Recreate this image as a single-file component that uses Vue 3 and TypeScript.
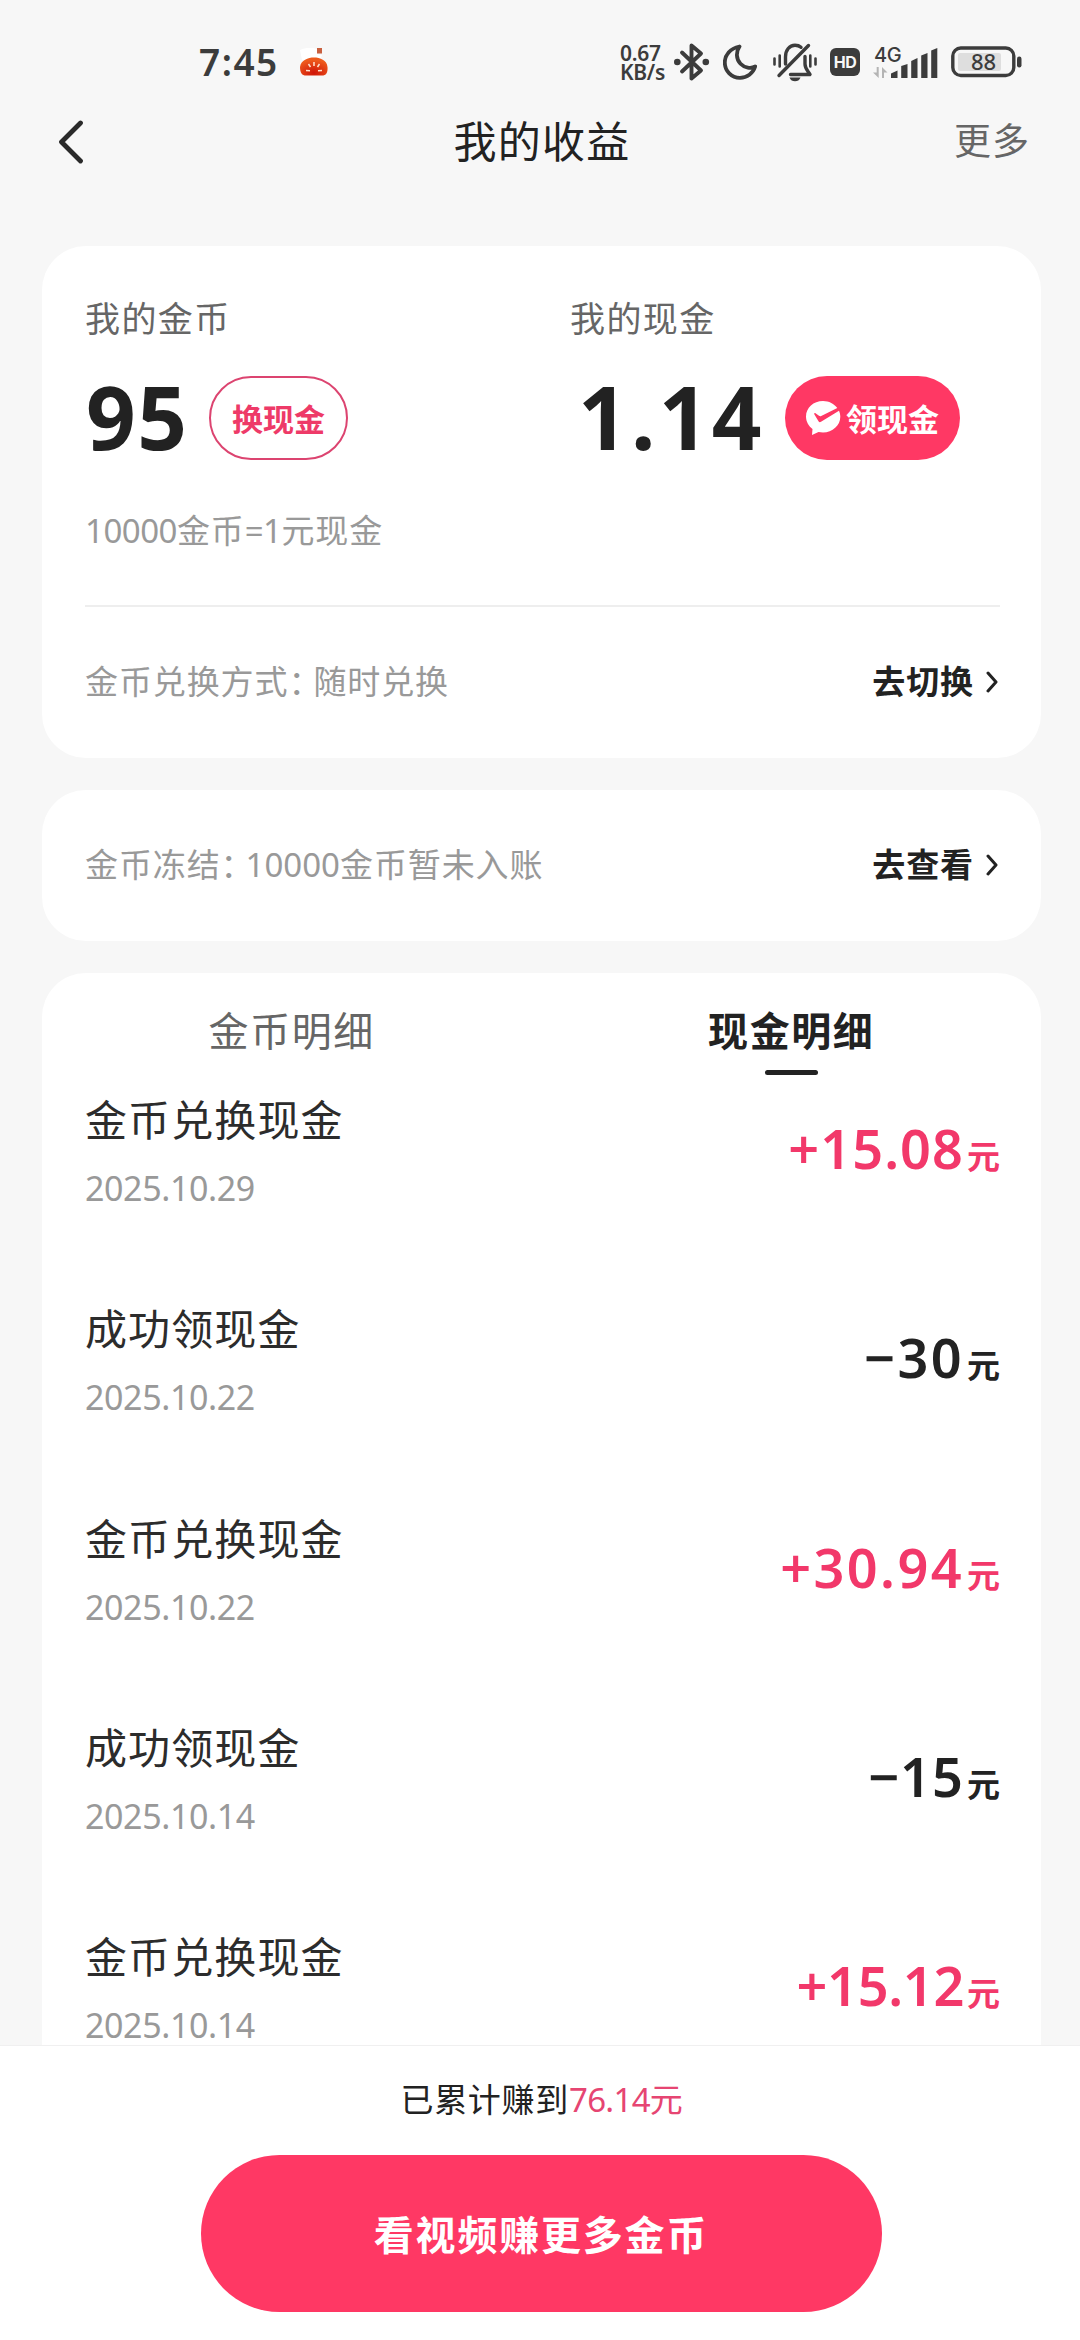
<script setup lang="ts">
interface CashRecord {
  title: string
  date: string
  amount: string
  income: boolean
}

const records: CashRecord[] = [
  { title: '金币兑换现金', date: '2025.10.29', amount: '+15.08', income: true },
  { title: '成功领现金', date: '2025.10.22', amount: '−30', income: false },
  { title: '金币兑换现金', date: '2025.10.22', amount: '+30.94', income: true },
  { title: '成功领现金', date: '2025.10.14', amount: '−15', income: false },
  { title: '金币兑换现金', date: '2025.10.14', amount: '+15.12', income: true },
]

function tracking(amount: string): string {
  const ones = amount.split('1').length - 1
  return `${(2.4 - 1.35 * ones).toFixed(2)}px`
}
</script>

<template>
  <div class="page">
    <header class="status">
      <span class="time">7:45</span>
      <svg class="pot" width="28" height="28" viewBox="0 0 28 28">
        <defs>
          <radialGradient id="potFill" cx="50%" cy="85%" r="70%">
            <stop offset="0" stop-color="#cf1408" />
            <stop offset="1" stop-color="#ee5a1c" />
          </radialGradient>
        </defs>
        <path d="M0 2 Q9 -2 17 1 L17 6 L22 7 L20 12 L2 12 Z" fill="#fff" />
        <rect x="17" y="0" width="5" height="5.5" fill="#c9603f" />
        <path d="M0 19 C1 12 8 9.500 14 9.500 C20 9.500 27 12 27.500 19 C28 25 26 27.500 22 27.500 H6 C2 27.500 0 25 0 19 Z" fill="url(#potFill)" />
        <path d="M14 14v4M8.500 16l2 3M19.500 16l-2 3M6 22.500l4 .2M22 22.500l-4 .2" stroke="#ffe3cf" stroke-width="1.500" />
      </svg>
      <div class="speed"><span>0.67</span><span>KB/s</span></div>
      <svg class="bt" width="36" height="40" viewBox="0 0 36 40" fill="none" stroke="#3c3c3c" stroke-width="3.900" stroke-linejoin="round" stroke-linecap="round">
        <path d="M8 10.500 L27 28.500 L17.500 36.500 V3.500 L27 11.500 L8 29.500" />
        <circle cx="3.300" cy="20" r="3.300" fill="#3c3c3c" stroke="none" />
        <circle cx="31.800" cy="20" r="3.300" fill="#3c3c3c" stroke="none" />
      </svg>
      <svg class="moon" width="34" height="36" viewBox="0 0 34 36" fill="none" stroke="#3c3c3c" stroke-width="3.800" stroke-linejoin="round">
        <path d="M16.500 2.500 C7 4.500 1.800 11 1.800 18.500 C1.800 27 8.500 33.800 17 33.800 C24 33.800 30 29.500 32.200 22.500 C28 24.800 21.500 24 17.500 19.800 C13 15 12.800 8 16.500 2.500 Z" />
      </svg>
      <svg class="bell" width="44" height="40" viewBox="0 0 44 40" fill="none" stroke="#3c3c3c" stroke-width="3.400" stroke-linecap="round" stroke-linejoin="round">
        <path d="M12.500 22 V15 C12.500 8 16.500 3.300 22 3.300 C24.500 3.300 26.500 4 28 5.300" />
        <path d="M32 14.500 V22 C32 26.500 34.500 28.500 37 32.500 H17.500" />
        <path d="M35.500 3.500 L6 33.500" />
        <path d="M1.500 16.500v6M6.700 13.500v11M37.300 13.500v11M42.500 16.500v6" stroke-width="2.600" />
        <path d="M16.500 35.500 H27.500 C26.500 38.300 24.500 39.300 22 39.300 C19.500 39.300 17.500 38.300 16.500 35.500 Z" fill="#3c3c3c" stroke="none" />
      </svg>
      <span class="hd">HD</span>
      <svg class="signal" width="65" height="36" viewBox="0 0 65 36">
        <text x="1" y="18" class="net">4G</text>
        <path d="M5.700 24 V35 L0 29.500 H3.700 V24 Z" fill="#b4b4b4" transform="translate(0 -1)" />
        <path d="M9 35 V24 L14.500 29.500 H11 V35 Z" fill="#b4b4b4" transform="translate(0 -1)" />
        <g fill="#3c3c3c">
          <path d="M18 29.500 L24.500 26.500 V34 H18 Z" />
          <path d="M28.200 22 L34.500 20 V34 H28.200 Z" />
          <path d="M38.200 17 L44.500 14 V34 H38.200 Z" />
          <path d="M48.200 11.500 L54.500 9 V34 H48.200 Z" />
          <path d="M58.200 6.500 L64.300 4 V34 H58.200 Z" />
        </g>
      </svg>
      <svg class="battery" width="71" height="32" viewBox="0 0 71 32">
        <rect x="1.800" y="2" width="61" height="27.500" rx="8" fill="none" stroke="#3c3c3c" stroke-width="3.400" />
        <rect x="7" y="7" width="43" height="18" rx="2" fill="#dedede" />
        <rect x="66" y="10.500" width="4.500" height="11" rx="2.200" fill="#3c3c3c" />
        <text x="32.500" y="24" text-anchor="middle" class="level">88</text>
      </svg>
    </header>

    <nav class="nav">
      <svg class="back" width="26" height="44" viewBox="0 0 26 44" fill="none" stroke="#2a2a2a" stroke-width="4.800" stroke-linecap="round" stroke-linejoin="round">
        <path d="M22.500 3 L3.500 22 L22.500 41" />
      </svg>
      <h1>我的收益</h1>
      <span class="more">更多</span>
    </nav>

    <main class="content">
      <section class="card">
        <div class="balances">
          <div class="balance coins">
            <div class="label">我的金币</div>
            <div class="value-row">
              <span class="value">95</span>
              <button class="pill outline">换现金</button>
            </div>
          </div>
          <div class="balance">
            <div class="label">我的现金</div>
            <div class="value-row">
              <span class="value cash">1.14</span>
              <button class="pill solid">
                <svg width="35" height="34" viewBox="0 0 35 34">
                  <path d="M17 0 C7.500 0 0 6.800 0 15.500 C0 20.500 2.500 25 6.500 28 L6 34 L12.500 31 C14 31.300 15.500 31.500 17 31.500 C26.500 31.500 34.300 24.500 34.300 15.800 C34.300 13.500 33.800 11.500 33 9.700 L15 20.800 C14 21.400 13.200 21.300 12.500 20.300 L8.300 13.300 C8 12.300 8.800 11.800 9.500 12.300 L13 14.800 C13.700 15.300 14.500 15.300 15.200 15 L31.300 7 C28.200 2.800 23 0 17 0 Z" fill="#fff" />
                </svg>
                <span>领现金</span>
              </button>
            </div>
          </div>
        </div>
        <div class="rate"><span class="num">10000</span>金币<span class="num">=1</span>元现金</div>
        <div class="divider"></div>
        <div class="row">
          <span class="hint">金币兑换方式<i class="colon">：</i>随时兑换</span>
          <span class="link">去切换
            <svg width="12" height="22" viewBox="0 0 12 22"><path d="M2 2 L10 11 L2 20" /></svg>
          </span>
        </div>
      </section>

      <section class="card frozen">
        <div class="row">
          <span class="hint">金币冻结<i class="colon">：</i><span class="num">10000</span>金币暂未入账</span>
          <span class="link">去查看
            <svg width="12" height="22" viewBox="0 0 12 22"><path d="M2 2 L10 11 L2 20" /></svg>
          </span>
        </div>
      </section>

      <section class="card details">
        <div class="tabs">
          <div class="tab">金币明细</div>
          <div class="tab active">现金明细</div>
        </div>
        <div v-for="(r, i) in records" :key="i" class="record">
          <div>
            <div class="title">{{ r.title }}</div>
            <div class="date">{{ r.date }}</div>
          </div>
          <div class="amount" :class="{ income: r.income }">
            <span :style="{ letterSpacing: tracking(r.amount) }">{{ r.amount }}</span><span class="unit">元</span>
          </div>
        </div>
      </section>
    </main>

    <footer class="footer">
      <div class="total">已累计赚到<span class="earned"><span class="num">76.14</span>元</span></div>
      <button class="cta">看视频赚更多金币</button>
    </footer>
  </div>
</template>

<style>
body {
  margin: 0;
  background: #f7f7f7;
}
</style>

<style scoped>
.page {
  display: flex;
  flex-direction: column;
  width: 1080px;
  height: 2340px;
  overflow: hidden;
  background: #f7f7f7;
  color: #222;
  font-family: Inter, "Noto Sans CJK SC", sans-serif;
}
button {
  margin: 0;
  padding: 0;
  border: 0;
  font-family: inherit;
}
svg {
  display: block;
  flex: none;
}
.num,
.value,
.date,
.amount,
.speed,
.time {
  font-family: "Noto Sans", "Noto Sans CJK SC", sans-serif;
}
.num { letter-spacing: 0; }
.status {
  box-sizing: border-box;
  display: flex;
  align-items: center;
  height: 100px;
  padding: 24px 58px 0 199px;
  color: #3c3c3c;
}
.time {
  width: 101px;
  font-size: 37px;
  font-weight: 600;
  line-height: 44px;
  letter-spacing: 1.5px;
}
.speed {
  display: flex;
  flex-direction: column;
  width: 46px;
  margin-left: auto;
  padding-top: 2px;
  font-size: 21px;
  font-weight: 600;
  line-height: 19px;
  letter-spacing: -0.3px;
}
.bt { margin-left: 8px; }
.moon { margin-left: 13px; }
.bell { margin-left: 16px; }
.hd {
  width: 30px;
  height: 28px;
  margin-left: 13px;
  border-radius: 6px;
  background: #3c3c3c;
  color: #f7f7f7;
  font-size: 16px;
  font-weight: 700;
  line-height: 29px;
  text-align: center;
  letter-spacing: -0.5px;
}
.signal { margin-left: 13px; }
.battery { margin-left: 13px; }
.net {
  font-size: 20px;
  font-weight: 500;
  fill: #3c3c3c;
  letter-spacing: -0.5px;
}
.level {
  font-family: "Noto Sans", sans-serif;
  font-size: 22px;
  font-weight: 500;
  fill: #3c3c3c;
}
.nav {
  display: flex;
  align-items: center;
  justify-content: space-between;
  height: 84px;
  padding: 0 50px 0 58px;
}
.back { margin-right: 46px; }
h1 {
  margin: 0;
  color: #222;
  font-size: 43px;
  font-weight: 400;
  line-height: 60px;
  letter-spacing: 1.2px;
}
.more {
  color: #666;
  font-size: 37px;
  line-height: 50px;
  letter-spacing: 1px;
}
.content {
  flex: 1;
  min-height: 0;
  padding: 62px 39px 0 42px;
  overflow: hidden;
}
.card {
  box-sizing: border-box;
  padding: 0 41px 0 43px;
  border-radius: 44px;
  background: #fff;
}
.balances {
  display: flex;
  padding-top: 49px;
}
.coins { width: 485px; }
.label {
  color: #666;
  font-size: 35px;
  line-height: 48px;
  letter-spacing: 1.4px;
}
.value-row {
  display: flex;
  align-items: center;
  height: 84px;
  margin-top: 33px;
}
.value {
  box-sizing: border-box;
  width: 124px;
  padding: 0 0 4px 1px;
  font-size: 87px;
  font-weight: 700;
  line-height: 84px;
  letter-spacing: 1.5px;
}
.value.cash {
  width: 215px;
  padding-left: 8px;
  letter-spacing: 3.3px;
}
.pill {
  box-sizing: border-box;
  display: flex;
  align-items: center;
  justify-content: center;
  height: 84px;
  padding-bottom: 1px;
  border-radius: 42px;
  font-size: 31px;
  font-weight: 700;
}
.outline {
  width: 139px;
  border: 2px solid #dc4470;
  background: #fff;
  color: #ee3a68;
}
.solid {
  gap: 5px;
  width: 175px;
  background: #ff3864;
  color: #fff;
}
.rate {
  margin-top: 51px;
  color: #999;
  font-size: 33px;
  line-height: 40px;
  letter-spacing: 0.9px;
}
.rate .num { letter-spacing: -0.5px; }
.divider {
  height: 2px;
  margin-top: 54px;
  background: #eee;
}
.row {
  box-sizing: border-box;
  display: flex;
  align-items: center;
  justify-content: space-between;
  height: 151px;
  padding-bottom: 1px;
}
.hint {
  color: #999;
  font-size: 33px;
  line-height: 40px;
  letter-spacing: 0.9px;
}
.colon {
  font-style: normal;
  letter-spacing: -8px;
}
.link {
  display: flex;
  align-items: center;
  gap: 12px;
  padding-right: 2px;
  font-size: 33px;
  font-weight: 700;
  line-height: 40px;
  letter-spacing: 0.9px;
}
.link svg {
  fill: none;
  stroke: #222;
  stroke-width: 3;
  stroke-linecap: round;
  stroke-linejoin: round;
}
.frozen { margin-top: 32px; }
.details {
  margin-top: 32px;
  padding: 0;
}
.tabs {
  display: flex;
  height: 102px;
}
.tab {
  display: flex;
  flex: 1;
  flex-direction: column;
  align-items: center;
  padding-top: 29px;
  color: #666;
  font-size: 40px;
  line-height: 60px;
  letter-spacing: 1.6px;
}
.tab.active {
  color: #222;
  font-weight: 700;
}
.tab.active::after {
  content: "";
  width: 53px;
  height: 5px;
  margin-top: 8px;
  border-radius: 3px;
  background: #222;
}
.record {
  box-sizing: border-box;
  display: flex;
  justify-content: space-between;
  height: 209.3px;
  padding: 21px 41px 0 43px;
}
.title {
  color: #2c2c2c;
  font-size: 42px;
  line-height: 50px;
  letter-spacing: 1.1px;
}
.date {
  margin-top: 22px;
  color: #999;
  font-size: 34px;
  line-height: 40px;
  letter-spacing: -0.4px;
}
.amount {
  margin-top: 22px;
  font-size: 54px;
  font-weight: 600;
  line-height: 60px;
}
.amount.income { color: #f2386a; }
.unit {
  margin-left: 3px;
  font-size: 33px;
}
.footer {
  box-sizing: border-box;
  display: flex;
  flex-direction: column;
  align-items: center;
  height: 295px;
  padding-top: 34px;
  border-top: 1px solid #f0f0f0;
  background: #fff;
}
.total {
  padding-left: 4px;
  font-size: 33px;
  line-height: 40px;
  letter-spacing: 0.7px;
}
.earned { color: #e64572; }
.earned .num { letter-spacing: -0.7px; }
.cta {
  width: 681px;
  height: 157px;
  margin: 35px 0 0 2px;
  padding-bottom: 2px;
  border-radius: 79px;
  background: #ff3864;
  color: #fff;
  font-size: 40px;
  font-weight: 700;
  letter-spacing: 1.8px;
}
</style>
